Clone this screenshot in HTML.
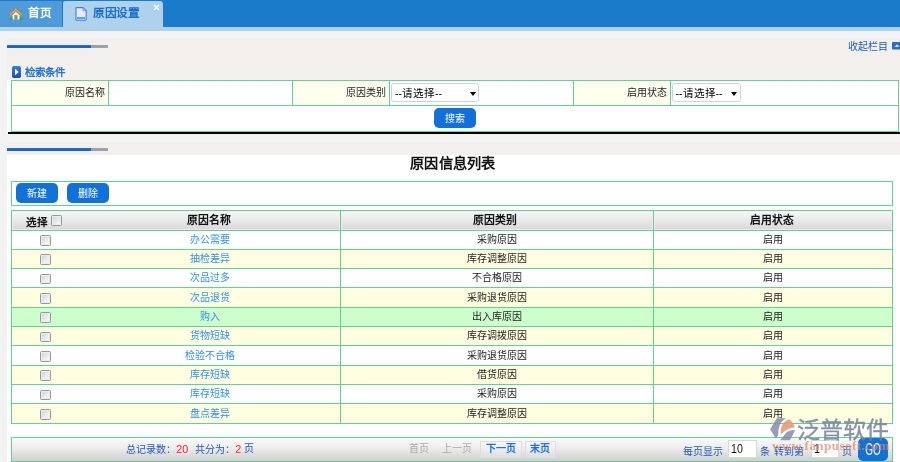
<!DOCTYPE html>
<html lang="zh-CN">
<head>
<meta charset="utf-8">
<title>原因设置</title>
<style>
html,body{margin:0;padding:0;}
body{width:900px;height:462px;overflow:hidden;position:relative;background:#f3f3f3;font-family:"Liberation Sans",sans-serif;font-size:10px;color:#222;}
#root{position:absolute;left:0;top:0;width:900px;height:462px;will-change:transform;}
.abs{position:absolute;}
.t{position:absolute;white-space:nowrap;line-height:12px;height:12px;}
#topbar{left:0;top:0;width:900px;height:27px;background:#1b7bcb;}
#tab1{left:0;top:1px;width:62px;height:26px;background:#4f9bd9;}
#tab2{left:63px;top:1px;width:100px;height:27px;background:#aed1ed;border-radius:2px 3px 0 0;}
#strip{left:0;top:27px;width:900px;height:4px;background:#aed1ed;}
.beige{background:#f3efec;}
.white{background:#fff;}
.bar-b{background:linear-gradient(#2f78d6,#185fc4 55%,#1f68cc);height:3.3px;}
.bar-g{background:#9aa1b3;height:3.3px;}
.hl{position:absolute;height:1px;background:#63d193;}
.vl{position:absolute;width:1px;background:#63d193;}
.btn{position:absolute;background:#1171d8;border-radius:5px;color:#fff;text-align:center;}
.sel{position:absolute;box-sizing:border-box;border:1px solid #ced3e4;border-radius:3px;background:#fff;}
.arr{position:absolute;width:0;height:0;border-left:3px solid transparent;border-right:3px solid transparent;border-top:4px solid #000;}
.cb{position:absolute;width:11.2px;height:10.8px;box-sizing:border-box;border:1px solid #979797;border-radius:1.5px;box-shadow:inset 0 0 0 1px #ececec;background:linear-gradient(135deg,#ccd0d7 0%,#e4e6ea 45%,#fdfdfd 100%);}
.lnk{color:#3390e6;}
.c{text-align:center;}
.r{text-align:right;}
.hd{position:absolute;background:linear-gradient(#f7f7f7,#ececec 40%,#d8d8d8);}
.inp{position:absolute;box-sizing:border-box;border:1px solid #d8d8d8;background:#fff;}
.pbox{position:absolute;box-sizing:border-box;border:1px solid #dedede;background:rgba(255,255,255,.18);}
</style>
</head>
<body>
<div id="root">

<!-- top tab bar -->
<div class="abs" id="topbar"></div>
<div class="abs" id="tab1"></div>
<div class="abs" id="tab2"></div>
<div class="abs" id="strip"></div>
<svg class="abs" style="left:9px;top:7px" width="14" height="14" viewBox="0 0 14 14">
<ellipse cx="2.3" cy="11.9" rx="2.2" ry="1.05" fill="#3fa536"/>
<ellipse cx="11.7" cy="11.9" rx="2.2" ry="1.05" fill="#3fa536"/>
<rect x="2" y="12" width="10" height=".9" fill="#4a9a40"/>
<path d="M3.6 8.2 L6.9 4.4 L10.4 8.2 L10.5 12.5 L3.6 12.5 Z" fill="#faf8f5"/>
<rect x="5.4" y="8.1" width="3.1" height="4.5" fill="#7d7d7d"/>
<rect x="6.3" y="8.1" width="1.2" height="4.5" fill="#999"/>
<path d="M6.9 .9 L13.5 7 L12 8.7 L6.9 4 L1.8 8.7 L.3 7 Z" fill="#cf8a38" stroke="#c07a2a" stroke-width=".5" stroke-linejoin="round"/>
<path d="M6.9 2.3 L12.6 7.7 M6.9 2.3 L1.2 7.7" stroke="#eab877" stroke-width=".9" fill="none"/>
</svg>
<svg class="abs" style="left:75px;top:7.4px" width="12.4" height="14" viewBox="0 0 12.4 14">
<path d="M1 1.2 Q1 .6 1.6 .6 L8 .6 L11.2 3.8 L11.2 12.6 Q11.2 13.2 10.6 13.2 L1.6 13.2 Q1 13.2 1 12.6 Z" fill="#e3ecfb" stroke="#5079cc" stroke-width="1.1"/>
<path d="M8 .6 L8 3.8 L11.2 3.8 Z" fill="#bcd4f4" stroke="#4a78c8" stroke-width=".6"/>
<rect x="2" y="10" width="8.2" height="2.2" fill="#5aa2ec"/>
</svg>
<div class="t" style="left:28px;top:7px;font-weight:bold;color:#fff;font-size:11.7px;letter-spacing:-.5px;">首页</div>
<div class="t" style="left:93px;top:6.9px;font-weight:bold;color:#1a6fc8;font-size:11.7px;letter-spacing:-.5px;">原因设置</div>
<svg class="abs" style="left:153px;top:4px" width="7" height="7" viewBox="0 0 7 7"><path d="M1 1 L6 6 M6 1 L1 6" stroke="#fff" stroke-width="1.1" fill="none"/></svg>

<!-- panels -->
<div class="abs beige" style="left:7px;top:39px;width:893px;height:41px;"></div>
<div class="abs bar-b" style="left:7px;top:45px;width:84px;"></div>
<div class="abs bar-g" style="left:91px;top:45px;width:17px;"></div>
<div class="abs white" style="left:7px;top:80px;width:893px;height:52px;"></div>
<div class="abs" style="left:8.4px;top:132.1px;width:892px;height:2.4px;background:#000;"></div>
<div class="abs beige" style="left:7px;top:143px;width:893px;height:12.6px;"></div>
<div class="abs bar-b" style="left:7px;top:148px;width:84px;"></div>
<div class="abs bar-g" style="left:91px;top:148px;width:17px;"></div>
<div class="abs white" style="left:7px;top:155px;width:893px;height:307px;"></div>

<div class="t" style="left:848px;top:40.5px;color:#1f5cb8;">收起栏目</div>
<svg class="abs" style="left:892px;top:42px" width="8" height="8" viewBox="0 0 8 8"><rect x="0" y="0" width="10" height="7.5" rx="1" fill="#2a6cc8"/><path d="M2.6 4.8 L5 2.4 L7.4 4.8 Z" fill="#fff"/></svg>

<!-- search section -->
<svg class="abs" style="left:12px;top:66px" width="9" height="12" viewBox="0 0 9 12"><defs><linearGradient id="ig" x1="0" y1="0" x2="0" y2="1"><stop offset="0" stop-color="#3c80d6"/><stop offset="1" stop-color="#1a4cae"/></linearGradient></defs><rect x="0" y="0" width="9" height="12" rx="1.8" fill="url(#ig)"/><path d="M3 2.8 L6.6 6 L3 9.2 Z" fill="#fff"/></svg>
<div class="t" style="left:25px;top:66px;font-weight:bold;color:#2673d0;font-size:10.5px;">检索条件</div>

<div class="abs" style="left:12px;top:81px;width:96px;height:24px;background:#fffff0;"></div>
<div class="abs" style="left:293px;top:81px;width:96px;height:24px;background:#fffff0;"></div>
<div class="abs" style="left:574px;top:81px;width:95px;height:24px;background:#fffff0;"></div>
<div class="hl" style="left:11px;top:80px;width:888px;"></div>
<div class="hl" style="left:11px;top:105px;width:888px;"></div>
<div class="hl" style="left:11px;top:131px;width:888px;"></div>
<div class="vl" style="left:11px;top:80px;height:52px;"></div>
<div class="vl" style="left:898px;top:80px;height:52px;"></div>
<div class="vl" style="left:107.7px;top:80px;height:25px;"></div>
<div class="vl" style="left:292.0px;top:80px;height:25px;"></div>
<div class="vl" style="left:388.6px;top:80px;height:25px;"></div>
<div class="vl" style="left:573.0px;top:80px;height:25px;"></div>
<div class="vl" style="left:669.5px;top:80px;height:25px;"></div>
<div class="t r" style="left:12px;width:93.2px;top:87.3px;">原因名称</div>
<div class="t r" style="left:293px;width:93px;top:87.3px;">原因类别</div>
<div class="t r" style="left:574px;width:93px;top:87.3px;">启用状态</div>
<div class="sel" style="left:391px;top:83px;width:88px;height:19px;"></div>
<div class="t" style="left:395px;top:86.8px;font-size:10.6px;color:#000;">--请选择--</div>
<div class="arr" style="left:469.5px;top:91.5px;"></div>
<div class="sel" style="left:672px;top:83px;width:69px;height:19px;"></div>
<div class="t" style="left:675.5px;top:86.8px;font-size:10.6px;color:#000;">--请选择--</div>
<div class="arr" style="left:731px;top:91.5px;"></div>
<div class="btn" style="left:434px;top:108px;width:42px;height:20px;line-height:22.5px;">搜索</div>
<div class="t c" style="left:352.8px;width:200px;top:155px;height:17px;line-height:17px;font-size:14.2px;letter-spacing:.2px;font-weight:bold;color:#111;">原因信息列表</div>
<div class="hl" style="left:11px;top:181px;width:882px;"></div>
<div class="hl" style="left:11px;top:205px;width:882px;"></div>
<div class="vl" style="left:11px;top:181px;height:25px;"></div>
<div class="vl" style="left:892px;top:181px;height:25px;"></div>
<div class="btn" style="left:16px;top:183px;width:42px;height:20px;line-height:22px;">新建</div>
<div class="btn" style="left:66.5px;top:183px;width:42px;height:20px;line-height:22px;">删除</div>
<div class="hd" style="left:12px;top:211px;width:880px;height:19px;"></div>
<div class="abs" style="left:12.0px;top:211px;width:328.0px;height:18.5px;box-shadow:inset 0 0 0 1px rgba(252,232,242,.75);"></div>
<div class="abs" style="left:341.0px;top:211px;width:311.5px;height:18.5px;box-shadow:inset 0 0 0 1px rgba(252,232,242,.75);"></div>
<div class="abs" style="left:653.5px;top:211px;width:238.5px;height:18.5px;box-shadow:inset 0 0 0 1px rgba(252,232,242,.75);"></div>
<div class="abs" style="left:12px;top:249.33px;width:880px;height:19.33px;background:#fffee0;"></div>
<div class="abs" style="left:12px;top:287.99px;width:880px;height:19.33px;background:#fffee0;"></div>
<div class="abs" style="left:12px;top:307.32px;width:880px;height:19.33px;background:#ccffcc;"></div>
<div class="abs" style="left:12px;top:326.65px;width:880px;height:19.33px;background:#fffee0;"></div>
<div class="abs" style="left:12px;top:365.31px;width:880px;height:19.33px;background:#fffee0;"></div>
<div class="abs" style="left:12px;top:403.97px;width:880px;height:19.33px;background:#fffee0;"></div>
<div class="hl" style="left:11px;top:210px;width:882px;"></div>
<div class="hl" style="left:11px;top:229.50px;width:882px;"></div>
<div class="hl" style="left:11px;top:248.83px;width:882px;"></div>
<div class="hl" style="left:11px;top:268.16px;width:882px;"></div>
<div class="hl" style="left:11px;top:287.49px;width:882px;"></div>
<div class="hl" style="left:11px;top:306.82px;width:882px;"></div>
<div class="hl" style="left:11px;top:326.15px;width:882px;"></div>
<div class="hl" style="left:11px;top:345.48px;width:882px;"></div>
<div class="hl" style="left:11px;top:364.81px;width:882px;"></div>
<div class="hl" style="left:11px;top:384.14px;width:882px;"></div>
<div class="hl" style="left:11px;top:403.47px;width:882px;"></div>
<div class="hl" style="left:11px;top:422.80px;width:882px;"></div>
<div class="vl" style="left:11px;top:210px;height:213.80px;"></div>
<div class="vl" style="left:892px;top:210px;height:213.80px;"></div>
<div class="vl" style="left:340px;top:210px;height:213.80px;"></div>
<div class="vl" style="left:652.5px;top:210px;height:213.80px;"></div>
<div class="t" style="left:26px;top:215.8px;font-weight:bold;font-size:10.6px;color:#111;">选择</div>
<div class="cb" style="left:51px;top:215.3px;"></div>
<div class="t c" style="left:78.6px;width:260px;top:214px;font-weight:bold;font-size:10.8px;color:#111;">原因名称</div>
<div class="t c" style="left:338.3px;width:313px;top:214px;font-weight:bold;font-size:10.8px;color:#111;">原因类别</div>
<div class="t c" style="left:651.8px;width:240px;top:214px;font-weight:bold;font-size:10.8px;color:#111;">启用状态</div>
<div class="cb" style="left:40.2px;top:235.00px;"></div>
<div class="t c lnk" style="left:80px;width:260px;top:233.70px;">办公需要</div>
<div class="t c" style="left:340px;width:313px;top:233.70px;">采购原因</div>
<div class="t c" style="left:653px;width:240px;top:233.70px;">启用</div>
<div class="cb" style="left:40.2px;top:254.33px;"></div>
<div class="t c lnk" style="left:80px;width:260px;top:253.03px;">抽检差异</div>
<div class="t c" style="left:340px;width:313px;top:253.03px;">库存调整原因</div>
<div class="t c" style="left:653px;width:240px;top:253.03px;">启用</div>
<div class="cb" style="left:40.2px;top:273.66px;"></div>
<div class="t c lnk" style="left:80px;width:260px;top:272.36px;">次品过多</div>
<div class="t c" style="left:340px;width:313px;top:272.36px;">不合格原因</div>
<div class="t c" style="left:653px;width:240px;top:272.36px;">启用</div>
<div class="cb" style="left:40.2px;top:292.99px;"></div>
<div class="t c lnk" style="left:80px;width:260px;top:291.69px;">次品退货</div>
<div class="t c" style="left:340px;width:313px;top:291.69px;">采购退货原因</div>
<div class="t c" style="left:653px;width:240px;top:291.69px;">启用</div>
<div class="cb" style="left:40.2px;top:312.32px;"></div>
<div class="t c lnk" style="left:80px;width:260px;top:311.02px;">购入</div>
<div class="t c" style="left:340px;width:313px;top:311.02px;">出入库原因</div>
<div class="t c" style="left:653px;width:240px;top:311.02px;">启用</div>
<div class="cb" style="left:40.2px;top:331.65px;"></div>
<div class="t c lnk" style="left:80px;width:260px;top:330.35px;">货物短缺</div>
<div class="t c" style="left:340px;width:313px;top:330.35px;">库存调拨原因</div>
<div class="t c" style="left:653px;width:240px;top:330.35px;">启用</div>
<div class="cb" style="left:40.2px;top:350.98px;"></div>
<div class="t c lnk" style="left:80px;width:260px;top:349.68px;">检验不合格</div>
<div class="t c" style="left:340px;width:313px;top:349.68px;">采购退货原因</div>
<div class="t c" style="left:653px;width:240px;top:349.68px;">启用</div>
<div class="cb" style="left:40.2px;top:370.31px;"></div>
<div class="t c lnk" style="left:80px;width:260px;top:369.01px;">库存短缺</div>
<div class="t c" style="left:340px;width:313px;top:369.01px;">借货原因</div>
<div class="t c" style="left:653px;width:240px;top:369.01px;">启用</div>
<div class="cb" style="left:40.2px;top:389.64px;"></div>
<div class="t c lnk" style="left:80px;width:260px;top:388.34px;">库存短缺</div>
<div class="t c" style="left:340px;width:313px;top:388.34px;">采购原因</div>
<div class="t c" style="left:653px;width:240px;top:388.34px;">启用</div>
<div class="cb" style="left:40.2px;top:408.97px;"></div>
<div class="t c lnk" style="left:80px;width:260px;top:407.67px;">盘点差异</div>
<div class="t c" style="left:340px;width:313px;top:407.67px;">库存调整原因</div>
<div class="t c" style="left:653px;width:240px;top:407.67px;">启用</div>
<div class="hd" style="left:12px;top:438px;width:880px;height:23px;background:linear-gradient(#fafafa,#ececec 45%,#cfcfcf);"></div>
<div class="hl" style="left:11px;top:437px;width:882px;"></div>
<div class="hl" style="left:11px;top:461px;width:882px;"></div>
<div class="vl" style="left:11px;top:437px;height:25px;"></div>
<div class="vl" style="left:892px;top:437px;height:25px;"></div>
<div class="t" style="left:126.2px;top:443.2px;color:#2259b8;">总记录数：<span style="color:#f22;font-size:10.8px">20</span></div>
<div class="t" style="left:195.2px;top:443.2px;color:#2259b8;">共分为：<span style="color:#f22;font-size:10.8px">2</span></div>
<div class="t" style="left:244.4px;top:443.2px;color:#2259b8;">页</div>
<div class="t" style="left:409.3px;top:443px;color:#aaa;">首页</div>
<div class="t" style="left:442.3px;top:443px;color:#aaa;">上一页</div>
<div class="pbox" style="left:480px;top:441px;width:42px;height:16.5px;"></div>
<div class="pbox" style="left:524.8px;top:441px;width:31.4px;height:16.5px;"></div>
<div class="t" style="left:486px;top:443px;color:#1f6fe6;font-weight:bold;">下一页</div>
<div class="t" style="left:530.2px;top:443px;color:#1f6fe6;font-weight:bold;">末页</div>
<div class="t" style="left:683px;top:445.6px;color:#2259b8;">每页显示</div>
<div class="inp" style="left:728.4px;top:440px;width:28.2px;height:18.2px;"></div>
<div class="t" style="left:730.6px;top:443.4px;color:#111;font-size:12.4px;transform:scaleX(.86);transform-origin:0 0;">10</div>
<div class="t" style="left:760px;top:445.6px;color:#2259b8;">条</div>
<div class="t" style="left:774.3px;top:445.6px;color:#2259b8;">转到第</div>
<div class="inp" style="left:811.2px;top:440px;width:27.6px;height:18.2px;"></div>
<div class="t" style="left:813.6px;top:443.4px;color:#111;font-size:12.4px;transform:scaleX(.86);transform-origin:0 0;">1</div>
<div class="t" style="left:842.3px;top:445.6px;color:#2259b8;">页</div>
<div class="btn" style="left:857.8px;top:437.6px;width:30.4px;height:23.3px;"></div>
<div class="t c" style="left:843px;width:60px;top:439px;height:20px;line-height:20px;font-size:17.3px;color:#fff;transform:scaleX(.58);">GO</div>
<svg class="abs" style="left:768px;top:416px" width="30" height="26" viewBox="0 0 30 26">
<path d="M8.7 2.2 L18.1 2.2 Q13.2 5 12 8.5 Q9.8 14 10.2 19.6 L7.7 22.4 L2.2 13.3 Z" fill="#8790ab" fill-opacity=".88"/>
<path d="M12.6 18.5 Q12.3 13 13.6 10.3 Q16 4.6 21.4 3.2 Q25.6 6.4 26.9 11.3 Q19.6 11.8 12.6 18.5 Z" fill="#e39a7c" fill-opacity=".9"/>
<path d="M15.9 19.6 Q18 16.2 20.4 15.2 Q23.5 13.9 27.2 13.9 L22 24.3 L12 24.3 Z" fill="#8790ab" fill-opacity=".88"/>
</svg>
<div class="t" style="left:797px;top:414.7px;height:30px;line-height:30px;font-size:23px;color:rgba(120,130,152,.86);-webkit-text-stroke:.35px rgba(120,130,152,.86);">泛普软件</div>
<div class="t" style="left:772px;top:436.8px;height:18px;line-height:18px;font-family:'Liberation Serif',serif;font-weight:bold;font-size:13px;letter-spacing:.47px;color:rgba(224,136,106,.72);">www.fanpusoft.com</div>
</div>
</body>
</html>
